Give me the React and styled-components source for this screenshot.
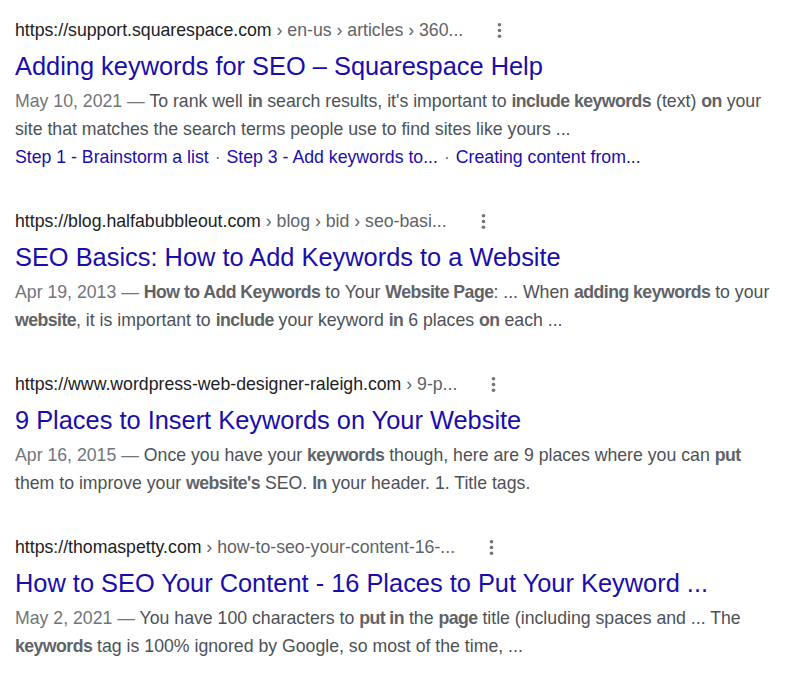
import React, { Fragment } from 'react'
import styled, { createGlobalStyle } from 'styled-components'

const GlobalStyle = createGlobalStyle`
  body {
    margin: 0;
    background: #fff;
    font-family: 'Liberation Sans', Arial, sans-serif;
  }
`

const Results = styled.main`
  display: flex;
  flex-direction: column;
  gap: 36px;
  padding: 16px 0 0 15px;
  max-width: 762px;
`

const Result = styled.div`
  display: flex;
  flex-direction: column;
`

const UrlRow = styled.div`
  display: flex;
  align-items: center;
  height: 28px;
  font-size: 17.7px;
  line-height: 28px;
  white-space: nowrap;
`

const Host = styled.span`
  color: #202124;
`

const Crumbs = styled.span`
  color: #5f6368;
`

const MoreButton = styled.span`
  display: inline-flex;
  align-items: center;
  justify-content: center;
  width: 23px;
  height: 23px;
  margin-left: 25px;
  color: #70757a;
`

const Title = styled.h3`
  margin: 5px 0 0;
  font-size: 25.4px;
  font-weight: normal;
  line-height: 34px;
  color: #1a0dab;
  white-space: nowrap;
`

const Snippet = styled.div`
  margin-top: 4px;
  font-size: 17.7px;
  line-height: 28px;
  color: #4d5156;
  b {
    color: #5f6368;
    font-weight: bold;
    letter-spacing: -0.55px;
  }
`

const DateText = styled.span`
  color: #70757a;
`

const Sitelinks = styled.div`
  font-size: 17.7px;
  line-height: 28px;
  color: #70757a;
  white-space: nowrap;
  a {
    color: #1a0dab;
    text-decoration: none;
  }
`

const Sep = styled.span`
  margin: 0 6px;
`

const MoreIcon = () => (
  <svg width="23" height="23" viewBox="0 0 24 24" fill="currentColor">
    <circle cx="12" cy="6" r="1.9" />
    <circle cx="12" cy="12" r="1.9" />
    <circle cx="12" cy="18" r="1.9" />
  </svg>
)

const results = [
  {
    host: 'https://support.squarespace.com',
    path: ' › en-us › articles › 360...',
    title: 'Adding keywords for SEO – Squarespace Help',
    date: 'May 10, 2021',
    snippet: [
      ['To rank well '], ['in', 1], [' search results, it\'s important to '],
      ['include keywords', 1], [' (text) '], ['on', 1],
      [' your site that matches the search terms people use to find sites like yours ...']
    ],
    links: ['Step 1 - Brainstorm a list', 'Step 3 - Add keywords to...', 'Creating content from...']
  },
  {
    host: 'https://blog.halfabubbleout.com',
    path: ' › blog › bid › seo-basi...',
    title: 'SEO Basics: How to Add Keywords to a Website',
    date: 'Apr 19, 2013',
    snippet: [
      ['How to Add Keywords', 1], [' to Your '], ['Website Page', 1], [': ... When '],
      ['adding keywords', 1], [' to your '], ['website', 1], [', it is important to '],
      ['include', 1], [' your keyword '], ['in', 1], [' 6 places '], ['on', 1], [' each ...']
    ]
  },
  {
    host: 'https://www.wordpress-web-designer-raleigh.com',
    path: ' › 9-p...',
    title: '9 Places to Insert Keywords on Your Website',
    date: 'Apr 16, 2015',
    snippet: [
      ['Once you have your '], ['keywords', 1], [' though, here are 9 places where you can '],
      ['put', 1], [' them to improve your '], ['website\'s', 1], [' SEO. '], ['In', 1],
      [' your header. 1. Title tags.']
    ]
  },
  {
    host: 'https://thomaspetty.com',
    path: ' › how-to-seo-your-content-16-...',
    title: 'How to SEO Your Content - 16 Places to Put Your Keyword ...',
    date: 'May 2, 2021',
    snippet: [
      ['You have 100 characters to '], ['put in', 1], [' the '], ['page', 1],
      [' title (including spaces and ... The '], ['keywords', 1],
      [' tag is 100% ignored by Google, so most of the time, ...']
    ]
  }
]

const App = () => (
  <Fragment>
    <GlobalStyle />
    <Results>
      {results.map(r => (
        <Result key={r.host}>
          <UrlRow>
            <span>
              <Host>{r.host}</Host>
              <Crumbs>{r.path}</Crumbs>
            </span>
            <MoreButton><MoreIcon /></MoreButton>
          </UrlRow>
          <Title>{r.title}</Title>
          <Snippet>
            <DateText>{r.date} — </DateText>
            {r.snippet.map(([text, bold], i) => (bold ? <b key={i}>{text}</b> : <span key={i}>{text}</span>))}
          </Snippet>
          {r.links && (
            <Sitelinks>
              {r.links.map((l, i) => (
                <Fragment key={l}>
                  {i > 0 && <Sep>·</Sep>}
                  <a href="#">{l}</a>
                </Fragment>
              ))}
            </Sitelinks>
          )}
        </Result>
      ))}
    </Results>
  </Fragment>
)

export default App
